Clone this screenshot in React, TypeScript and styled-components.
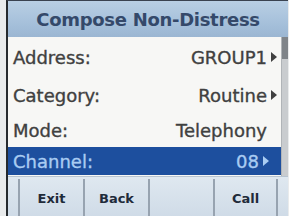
import styled, { createGlobalStyle } from "styled-components";

const GlobalStyle = createGlobalStyle`
  html, body {
    margin: 0;
    padding: 0;
    background: #e9ebec;
    overflow: hidden;
  }
`;

type Item = {
  label: string;
  value: string;
  arrow: boolean;
  height: number;
  selected?: boolean;
};

const items: Item[] = [
  { label: "Address:", value: "GROUP1", arrow: true, height: 40 },
  { label: "Category:", value: "Routine", arrow: true, height: 36 },
  { label: "Mode:", value: "Telephony", arrow: false, height: 34 },
  { label: "Channel:", value: "08", arrow: true, height: 28, selected: true },
];

const softKeys = ["Exit", "Back", "", "Call"];

export default function App() {
  return (
    <>
      <GlobalStyle />
      <Screen>
        <Header>Compose Non-Distress</Header>
        <Body>
          <List>
            {items.map((item) => (
              <Row key={item.label} $height={item.height} $selected={!!item.selected}>
                <Label>{item.label}</Label>
                <Value>
                  {item.value}
                  <Arrow $visible={item.arrow} />
                </Value>
              </Row>
            ))}
          </List>
          <ScrollTrack>
            <ScrollThumb />
          </ScrollTrack>
        </Body>
        <SoftKeyBar>
          {softKeys.map((key, i) => (
            <SoftKey key={i}>{key}</SoftKey>
          ))}
        </SoftKeyBar>
      </Screen>
    </>
  );
}

const Screen = styled.div`
  display: flex;
  flex-direction: column;
  margin-left: 6px;
  width: 280px;
  height: 216px;
  border-left: 2px solid #262a2e;
  border-top: 1px solid #3a4250;
  background: #f7f7f5;
  font-family: "DejaVu Sans", Verdana, sans-serif;
`;

const Header = styled.div`
  height: 36px;
  display: flex;
  align-items: center;
  justify-content: center;
  background: linear-gradient(#b9cfe4, #a3bed9 70%, #9bb6d2);
  color: #34496a;
  font-weight: 700;
  font-size: 18px;
  letter-spacing: -0.3px;
`;

const Body = styled.div`
  display: flex;
  height: 139px;
`;

const List = styled.div`
  flex: 1;
  display: flex;
  flex-direction: column;
`;

const Row = styled.div<{ $height: number; $selected: boolean }>`
  height: ${({ $height }) => $height}px;
  display: flex;
  align-items: center;
  justify-content: space-between;
  padding: 0 ${({ $selected }) => ($selected ? 12 : 4)}px 0 5px;
  font-size: 18px;
  -webkit-text-stroke: 0.35px currentColor;
  color: ${({ $selected }) => ($selected ? "#a9ccf2" : "#404040")};
  background: ${({ $selected }) => ($selected ? "#1d4f9e" : "transparent")};
`;

const Label = styled.span``;

const Value = styled.span`
  display: flex;
  align-items: center;
  gap: 4px;
`;

const Arrow = styled.span<{ $visible: boolean }>`
  width: 0;
  height: 0;
  border-top: 5px solid transparent;
  border-bottom: 5px solid transparent;
  border-left: 6px solid currentColor;
  visibility: ${({ $visible }) => ($visible ? "visible" : "hidden")};
`;

const ScrollTrack = styled.div`
  width: 6px;
  background: #c9cccf;
  border-left: 1px solid #b0b4b8;
`;

const ScrollThumb = styled.div`
  height: 22px;
  background: #7f8489;
`;

const SoftKeyBar = styled.div`
  flex: 1;
  display: grid;
  grid-template-columns: repeat(4, 65px);
  padding: 2px 0 0 10px;
  background: linear-gradient(#dfe8f0, #cfdbe7);
  border-top: 1px solid #b8c4d0;
`;

const SoftKey = styled.div`
  display: flex;
  align-items: center;
  justify-content: center;
  border-left: 2px solid #97a3b0;
  font-size: 13px;
  font-weight: 700;
  color: #1f2b3a;
  &:last-child {
    border-right: 2px solid #97a3b0;
  }
`;
